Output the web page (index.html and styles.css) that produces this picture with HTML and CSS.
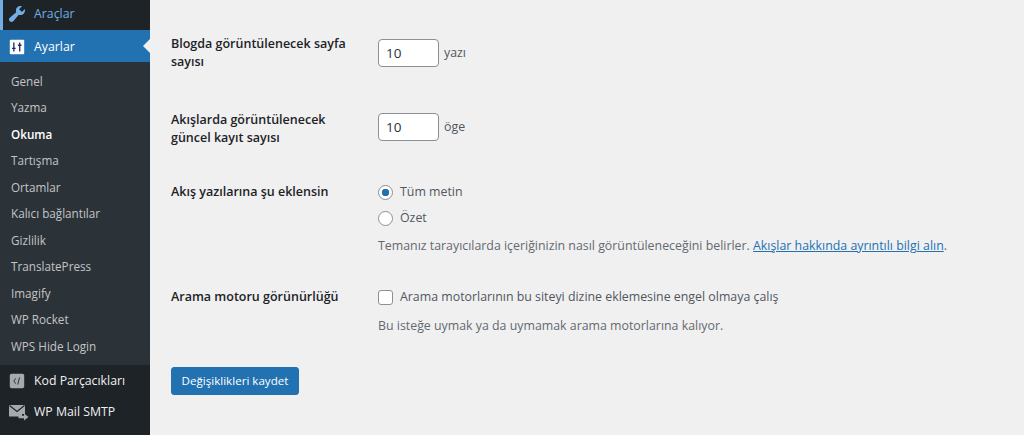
FILE: index.html
```html
<!DOCTYPE html>
<html lang="tr">

<head>
	<meta charset="UTF-8">
	<meta name="viewport" content="width=device-width, initial-scale=1.0">
	<title>Okuma Ayarları</title>

	<link rel="stylesheet" href="styles.css">
</head>

<body>
	<div class="wrap">
		<nav class="sidebar">
			<a class="menu-item tools" href="#">
				<svg class="menu-icon" viewBox="0 0 20 20"><path d="M16.68 9.77c-1.34 1.34-3.3 1.67-4.95.99l-5.41 6.52c-.99.99-2.59.99-3.58 0s-.99-2.59 0-3.57l6.52-5.42c-.68-1.65-.35-3.61.99-4.95 1.28-1.28 3.12-1.62 4.72-1.06l-2.89 2.89 2.82 2.82 2.86-2.87c.53 1.58.18 3.39-1.08 4.65z" fill="#72aee6"/></svg>
				<span>Araçlar</span>
			</a>
			<a class="menu-item current" href="#">
				<svg class="menu-icon" viewBox="0 0 20 20">
					<rect x="2" y="2" width="16" height="16" rx="1" fill="#fff"/>
					<path d="M6.500 5v10M4.500 11.500h4M13 5v10M11 8h4" stroke="#1d2f6f" stroke-width="1.500" fill="none"/>
				</svg>
				<span>Ayarlar</span>
			</a>
			<ul class="submenu">
				<li>Genel</li>
				<li>Yazma</li>
				<li class="active">Okuma</li>
				<li>Tartışma</li>
				<li>Ortamlar</li>
				<li>Kalıcı bağlantılar</li>
				<li>Gizlilik</li>
				<li>TranslatePress</li>
				<li>Imagify</li>
				<li>WP Rocket</li>
				<li>WPS Hide Login</li>
			</ul>
			<a class="menu-item plugin" href="#">
				<svg class="menu-icon" viewBox="0 0 20 20">
					<rect x="2" y="2" width="16" height="16" rx="2" fill="#a7aaad"/>
					<path d="M8.500 7L6.500 10l2 3M12.800 6l-2 8" stroke="#2c3338" stroke-width="1.100" fill="none"/>
				</svg>
				<span>Kod Parçacıkları</span>
			</a>
			<a class="menu-item plugin" href="#">
				<svg class="menu-icon mail" viewBox="0 0 20 20">
					<path d="M0 3h16v9h-3v2.500H0z" fill="#a7aaad"/>
					<path d="M0.500 3.500L8 9.500l7.500-6" stroke="#1d2327" stroke-width="1.200" fill="none"/>
					<path d="M15 11.500l4.500 3.500-4.500 3.500v-2.200H9.500v-2.600H15z" fill="#a7aaad"/>
				</svg>
				<span>WP Mail SMTP</span>
			</a>
		</nav>

		<form action="" class="content">
			<div class="row row-posts">
				<label class="row-title">Blogda görüntülenecek sayfa sayısı</label>
				<div class="field inline"><input type="text" class="num" value="10"> yazı</div>
			</div>
			<div class="row row-feed">
				<label class="row-title">Akışlarda görüntülenecek güncel kayıt sayısı</label>
				<div class="field inline"><input type="text" class="num" value="10"> öge</div>
			</div>
			<div class="row row-type">
				<label class="row-title">Akış yazılarına şu eklensin</label>
				<div class="field">
					<div class="choice"><input type="radio" name="feed" class="radio" checked> Tüm metin</div>
					<div class="choice"><input type="radio" name="feed" class="radio"> Özet</div>
					<p class="hint">Temanız tarayıcılarda içeriğinizin nasıl görüntüleneceğini belirler. <a href="#">Akışlar hakkında ayrıntılı bilgi alın</a>.</p>
				</div>
			</div>
			<div class="row row-search">
				<label class="row-title">Arama motoru görünürlüğü</label>
				<div class="field">
					<div class="choice"><input type="checkbox" class="check"> Arama motorlarının bu siteyi dizine eklemesine engel olmaya çalış</div>
					<p class="hint">Bu isteğe uymak ya da uymamak arama motorlarına kalıyor.</p>
				</div>
			</div>
			<button class="btn-save" type="button">Değişiklikleri kaydet</button>
		</form>
	</div>
</body>

</html>
```

FILE: styles.css
```css
* {
	box-sizing: border-box;
}

html,
body {
	margin: 0;
	height: 100%;
	overflow: hidden;
}

body {
	background-color: #f0f0f1;
	color: #3c434a;
	font-family: "Open Sans", "Noto Sans", sans-serif;
	font-size: 12.5px;
	line-height: 18px;
}

.wrap {
	display: flex;
	height: 435px;
}

/* sidebar */
.sidebar {
	width: 150px;
	flex: none;
	background-color: #1d2327;
	color: #f0f0f1;
}

.menu-item {
	display: flex;
	align-items: center;
	gap: 8px;
	padding-left: 8px;
	color: #f0f0f1;
	text-decoration: none;
	font-size: 12.300px;
}

.menu-icon {
	width: 18px;
	height: 18px;
	flex: none;
}

.tools {
	height: 34px;
	margin-top: -4px;
	padding-top: 1px;
	padding-left: 4px;
	gap: 7px;
	border-left: 3px solid #72aee6;
	color: #72aee6;
}

.tools .menu-icon {
	width: 20px;
	height: 20px;
}

.current {
	position: relative;
	height: 32px;
	padding-top: 1px;
	background-color: #2271b1;
	color: #fff;
}

.current::after {
	content: "";
	position: absolute;
	right: 0;
	top: 9px;
	border: 7px solid transparent;
	border-right-color: #f0f0f1;
	border-left-width: 0;
}

.submenu {
	margin: 0;
	padding: 5.500px 0 6px;
	list-style: none;
	background-color: #2c3338;
	color: #c3c4c7;
}

.submenu li {
	height: 26.500px;
	padding-left: 11px;
	line-height: 26px;
	font-size: 11.700px;
}

.submenu .active {
	color: #fff;
	font-weight: 600;
}

.plugin {
	height: 31px;
}

.mail {
	width: 20px;
	height: 20px;
	margin-left: 1px;
	margin-right: -3px;
}

/* form */
.content {
	flex: 1;
	padding-left: 21px;
}

.row {
	display: flex;
}

.row-title {
	width: 207px;
	flex: none;
	padding-right: 20px;
	font-weight: 600;
	color: #1d2327;
}

.field {
	flex: 1;
	color: #50575e;
	font-size: 12.370px;
}

.inline {
	display: flex;
	align-items: center;
	align-self: flex-start;
	gap: 5px;
}

.num {
	width: 61px;
	height: 28px;
	margin: 0;
	padding: 0 7px;
	border: 1px solid #8c8f94;
	border-radius: 4px;
	background-color: #fff;
	color: #2c3338;
	font: inherit;
	font-size: 13.500px;
}

.row-posts {
	padding-top: 39px;
	height: 113px;
}

.row-posts .row-title {
	margin-top: -4px;
}

.row-feed {
	height: 70px;
}

.row-feed .row-title {
	margin-top: -2px;
}

.row-type {
	height: 105px;
}

.row-search {
	height: 79px;
}

.row-type .field,
.row-search .field {
	margin-top: -4px;
}

.choice {
	display: flex;
	align-items: center;
	gap: 7px;
	height: 26px;
}

.radio,
.check {
	appearance: none;
	width: 15px;
	height: 15px;
	margin: 0;
	border: 1px solid #8c8f94;
	background-color: #fff;
}

.radio {
	border-radius: 50%;
}

.radio:checked {
	background: radial-gradient(circle, #2271b1 0 3.500px, #fff 4px);
}

.check {
	border-radius: 3px;
}

.hint {
	margin: 6px 0 0;
	color: #646970;
}

.row-search .hint {
	margin-top: 7px;
}

.hint a {
	color: #2271b1;
}

.btn-save {
	display: block;
	width: 128px;
	height: 28px;
	padding: 0;
	border: 1px solid #2271b1;
	border-radius: 3px;
	background-color: #2271b1;
	color: #fff;
	font: inherit;
	font-size: 11.600px;
}
```
